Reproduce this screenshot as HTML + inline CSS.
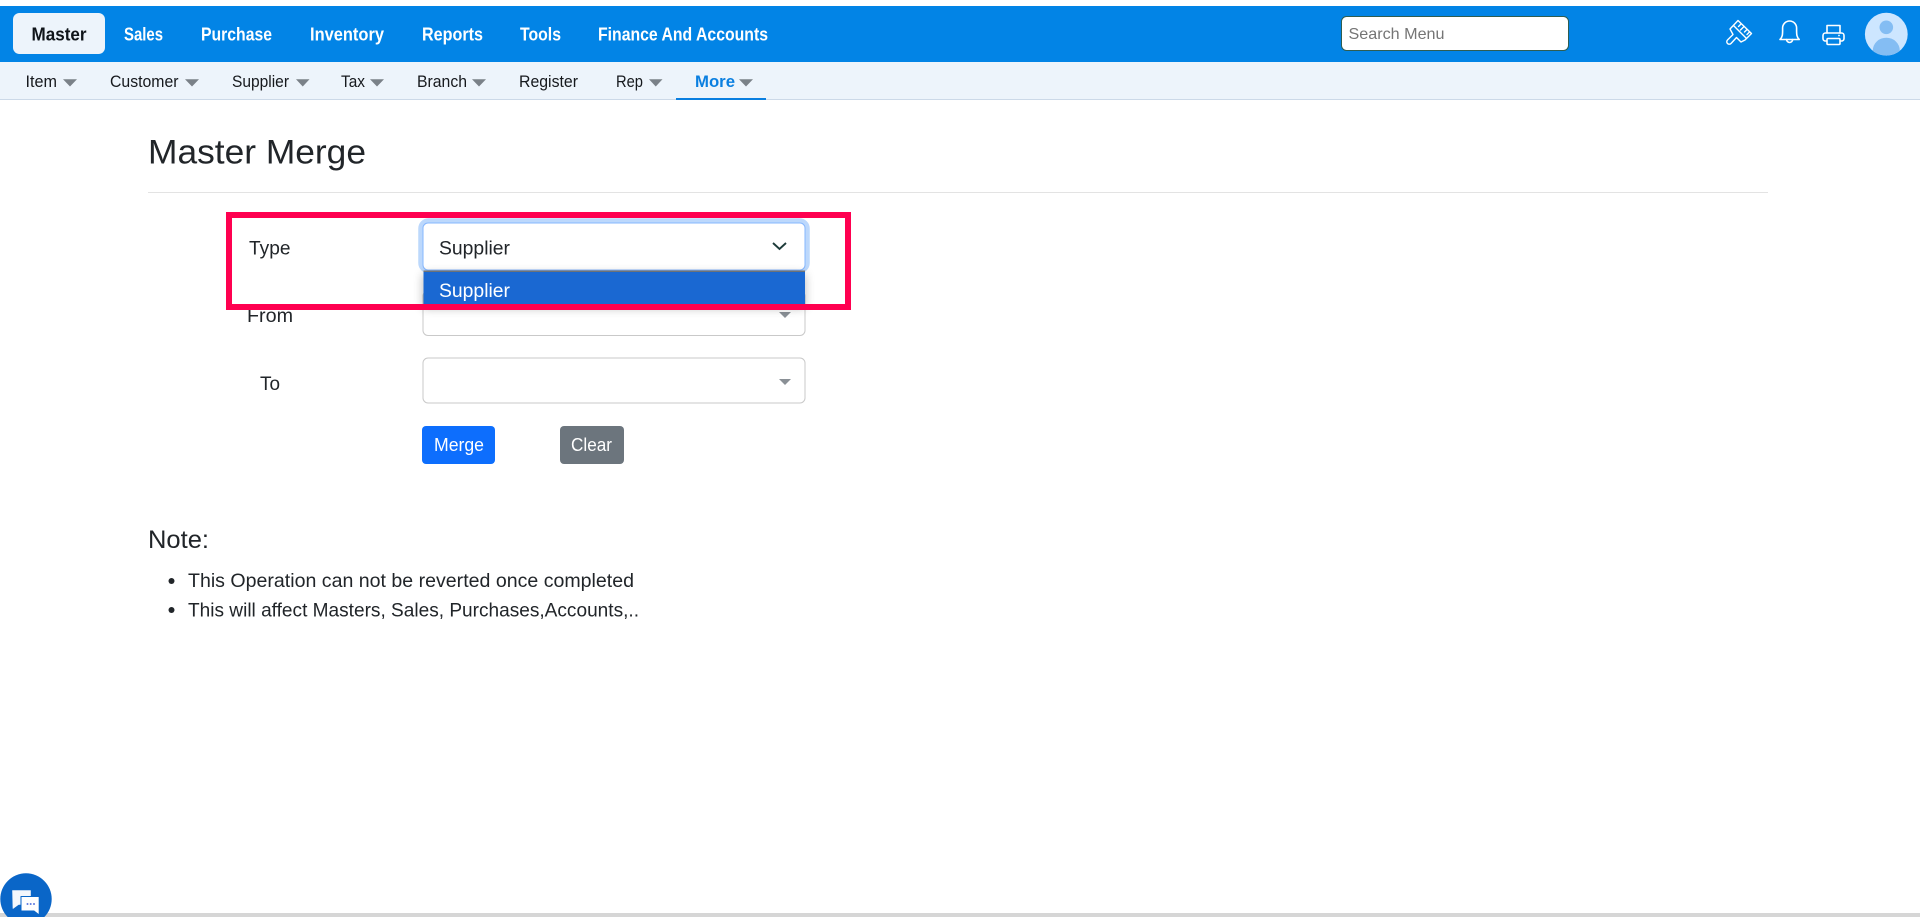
<!DOCTYPE html>
<html lang="en">
<head>
<meta charset="utf-8">
<title>Master Merge</title>
<style>
html,body{margin:0;padding:0;width:1920px;height:917px;overflow:hidden;background:#fff}
svg{display:block;position:absolute;left:0;top:0}
text{font-family:"Liberation Sans",Arial,sans-serif;fill:#212529}
.nav{font-size:18.5px;font-weight:700;fill:#fff}
.sub{font-size:16.5px;fill:#16191d}
.body{font-size:19.5px}
</style>
</head>
<body>
<svg width="1920" height="917" viewBox="0 0 1920 917" xmlns="http://www.w3.org/2000/svg">
<defs>
<filter id="ddshadow" x="-10%" y="-30%" width="120%" height="170%"><feGaussianBlur stdDeviation="5"/></filter>
<clipPath id="avatarclip"><circle cx="1886.3" cy="34.2" r="21.4"/></clipPath>
</defs>

<!-- Top navigation -->
<rect x="0" y="6" width="1920" height="56" fill="#0284e6"/>
<rect x="13" y="13" width="92" height="41" rx="6.5" fill="#edf4fb"/>
<text class="nav" x="31.5" y="40.5" textLength="55" lengthAdjust="spacingAndGlyphs" style="fill:#10151a">Master</text>
<text class="nav" x="124" y="40.5" textLength="39" lengthAdjust="spacingAndGlyphs">Sales</text>
<text class="nav" x="201" y="40.5" textLength="71" lengthAdjust="spacingAndGlyphs">Purchase</text>
<text class="nav" x="310" y="40.5" textLength="74" lengthAdjust="spacingAndGlyphs">Inventory</text>
<text class="nav" x="422" y="40.5" textLength="61" lengthAdjust="spacingAndGlyphs">Reports</text>
<text class="nav" x="520" y="40.5" textLength="41" lengthAdjust="spacingAndGlyphs">Tools</text>
<text class="nav" x="598" y="40.5" textLength="170" lengthAdjust="spacingAndGlyphs">Finance And Accounts</text>

<!-- Search -->
<rect x="1341.5" y="16.5" width="227" height="34" rx="5" fill="#fff" stroke="#2f5d50"/>
<text x="1348.5" y="39" font-size="16" textLength="96" lengthAdjust="spacingAndGlyphs" style="fill:#757575">Search Menu</text>

<!-- Brush icon -->
<g fill="none" stroke="#fff" stroke-width="1.4" stroke-linejoin="round" stroke-linecap="round">
<path d="M1738 20.5 L1751.5 33.5 L1745 40 L1741 42 L1736.5 37.5 L1731 43.5 a2.4 2.4 0 0 1 -3.5 -3.5 L1733 34.5 L1730 29 Z"/>
<path d="M1741 24 l-2.5 2.5 M1744 26.5 l-3.5 3.5 M1747 29.5 l-2.5 2.5 M1749.5 32 l-2.5 2.5"/>
<path d="M1733.5 25.5 L1746 38"/>
</g>
<!-- Bell icon -->
<g fill="none" stroke="#fff" stroke-width="1.6" stroke-linejoin="round" stroke-linecap="round">
<path d="M1780 39.5 c2.5-2.5 2.6-5 2.6-9 v-2.5 a7 7 0 0 1 14 0 v2.5 c0 4 .1 6.5 2.6 9 z"/>
<path d="M1786.6 39.5 a3 3 0 0 0 6 0"/>
<!-- Printer icon -->
<path d="M1827 33 v-7.5 h13 v7.5"/>
<rect x="1823" y="33" width="21" height="8" rx="2.5"/>
<rect x="1827" y="38.5" width="13" height="6" rx="1" fill="#0284e6"/>
</g>
<circle cx="1839" cy="35.5" r=".9" fill="#fff"/>

<!-- Avatar -->
<circle cx="1886.3" cy="34.2" r="21.4" fill="#cde6ff"/>
<g clip-path="url(#avatarclip)">
<circle cx="1886.3" cy="27.3" r="6.8" fill="#84bdf3"/>
<ellipse cx="1886.3" cy="50.5" rx="13.5" ry="12.8" fill="#84bdf3"/>
</g>

<!-- Sub navigation -->
<rect x="0" y="62" width="1920" height="37" fill="#edf4fb"/>
<rect x="0" y="99" width="1920" height="1" fill="#ccd9e8"/>
<text class="sub" x="25.5" y="87" textLength="31.5" lengthAdjust="spacingAndGlyphs">Item</text>
<path d="M63 79.3h14l-7 7.2z" fill="#7a8188"/>
<text class="sub" x="110" y="87" textLength="68.5" lengthAdjust="spacingAndGlyphs">Customer</text>
<path d="M185 79.3h14l-7 7.2z" fill="#7a8188"/>
<text class="sub" x="232" y="87" textLength="57" lengthAdjust="spacingAndGlyphs">Supplier</text>
<path d="M296 79.3h13.5l-6.75 7.2z" fill="#7a8188"/>
<text class="sub" x="341" y="87" textLength="24" lengthAdjust="spacingAndGlyphs">Tax</text>
<path d="M370 79.3h14l-7 7.2z" fill="#7a8188"/>
<text class="sub" x="417" y="87" textLength="50" lengthAdjust="spacingAndGlyphs">Branch</text>
<path d="M472 79.3h14l-7 7.2z" fill="#7a8188"/>
<text class="sub" x="519" y="87" textLength="59" lengthAdjust="spacingAndGlyphs">Register</text>
<text class="sub" x="616" y="87" textLength="27" lengthAdjust="spacingAndGlyphs">Rep</text>
<path d="M649 79.3h13.5l-6.75 7.2z" fill="#7a8188"/>
<text class="sub" x="695" y="87" textLength="40" lengthAdjust="spacingAndGlyphs" style="fill:#0a7fe0;font-weight:700">More</text>
<path d="M739 79.3h14l-7 7.2z" fill="#7a8188"/>
<rect x="676" y="98" width="90" height="2" fill="#0a7fe0"/>

<!-- Heading -->
<text x="148" y="163.5" font-size="34" textLength="218" lengthAdjust="spacingAndGlyphs">Master Merge</text>
<rect x="148" y="192" width="1620" height="1" fill="#e3e3e3"/>

<!-- From -->
<text class="body" x="247" y="322" textLength="46" lengthAdjust="spacingAndGlyphs">From</text>
<rect x="423" y="291" width="382" height="44.5" rx="5" fill="#fff" stroke="#c9c9c9"/>
<path d="M779 312h12l-6 6z" fill="#8a9096"/>

<!-- To -->
<text class="body" x="260" y="390" textLength="20" lengthAdjust="spacingAndGlyphs">To</text>
<rect x="423" y="358" width="382" height="45" rx="5" fill="#fff" stroke="#c9c9c9"/>
<path d="M779 379h12l-6 6z" fill="#8a9096"/>

<!-- Type -->
<text class="body" x="249" y="254.5" textLength="41.5" lengthAdjust="spacingAndGlyphs">Type</text>
<rect x="420.5" y="220.5" width="387" height="50.5" rx="8" fill="#fff" stroke="#bcd8fc" stroke-width="4.5"/>
<rect x="423" y="223" width="382" height="47" rx="5" fill="#fff" stroke="#86b7fe"/>
<text class="body" x="439" y="254.5" textLength="71" lengthAdjust="spacingAndGlyphs">Supplier</text>
<path d="M773 243l6.5 6 6.5-6" fill="none" stroke="#1d3b3a" stroke-width="1.9"/>

<!-- Dropdown -->
<rect x="423" y="274" width="382" height="34" fill="#000" opacity=".28" filter="url(#ddshadow)"/>
<rect x="423.5" y="270.5" width="381.5" height="1.5" fill="#6d7277"/>
<rect x="423.5" y="272" width="381.5" height="34" fill="#1a68d2"/>
<text class="body" x="439" y="297" textLength="71" lengthAdjust="spacingAndGlyphs" style="fill:#fff">Supplier</text>

<!-- Highlight box -->
<path fill-rule="evenodd" d="M226 212H851V310H226Z M232 218V304H845V218Z" fill="#ff0050"/>

<!-- Buttons -->
<rect x="422" y="426" width="73" height="38" rx="4" fill="#0d6efd"/>
<text x="434" y="451" font-size="18" textLength="50" lengthAdjust="spacingAndGlyphs" style="fill:#fff">Merge</text>
<rect x="560" y="426" width="64" height="38" rx="4" fill="#6c757d"/>
<text x="571" y="451" font-size="18" textLength="41" lengthAdjust="spacingAndGlyphs" style="fill:#fff">Clear</text>

<!-- Note -->
<text x="148" y="548" font-size="25" textLength="61" lengthAdjust="spacingAndGlyphs">Note:</text>
<circle cx="171.5" cy="581" r="3" fill="#212529"/>
<text class="body" x="188" y="587" textLength="446" lengthAdjust="spacingAndGlyphs">This Operation can not be reverted once completed</text>
<circle cx="171.5" cy="610" r="3" fill="#212529"/>
<text class="body" x="188" y="616.5" textLength="451" lengthAdjust="spacingAndGlyphs">This will affect Masters, Sales, Purchases,Accounts,..</text>

<!-- Bottom bar -->
<rect x="0" y="913" width="1920" height="4" fill="#d6d6d6"/>

<!-- Chat widget -->
<circle cx="26" cy="899" r="25.7" fill="#0a66c8"/>
<path d="M12.5 890.5h18v14h-12l-5.5 4z" fill="#f4f7fc" stroke="#f4f7fc" stroke-width=".6" stroke-linejoin="round"/>
<path d="M21 896.5h18.2v14.5l0 4-5.2-4h-13z" fill="#fff" stroke="#0a66c8" stroke-width="1" stroke-linejoin="round"/>
<circle cx="27.5" cy="904" r="1" fill="#5a78e0"/><circle cx="30.7" cy="904" r="1" fill="#5a78e0"/><circle cx="34" cy="904" r="1" fill="#5a78e0"/>
</svg>
</body>
</html>
